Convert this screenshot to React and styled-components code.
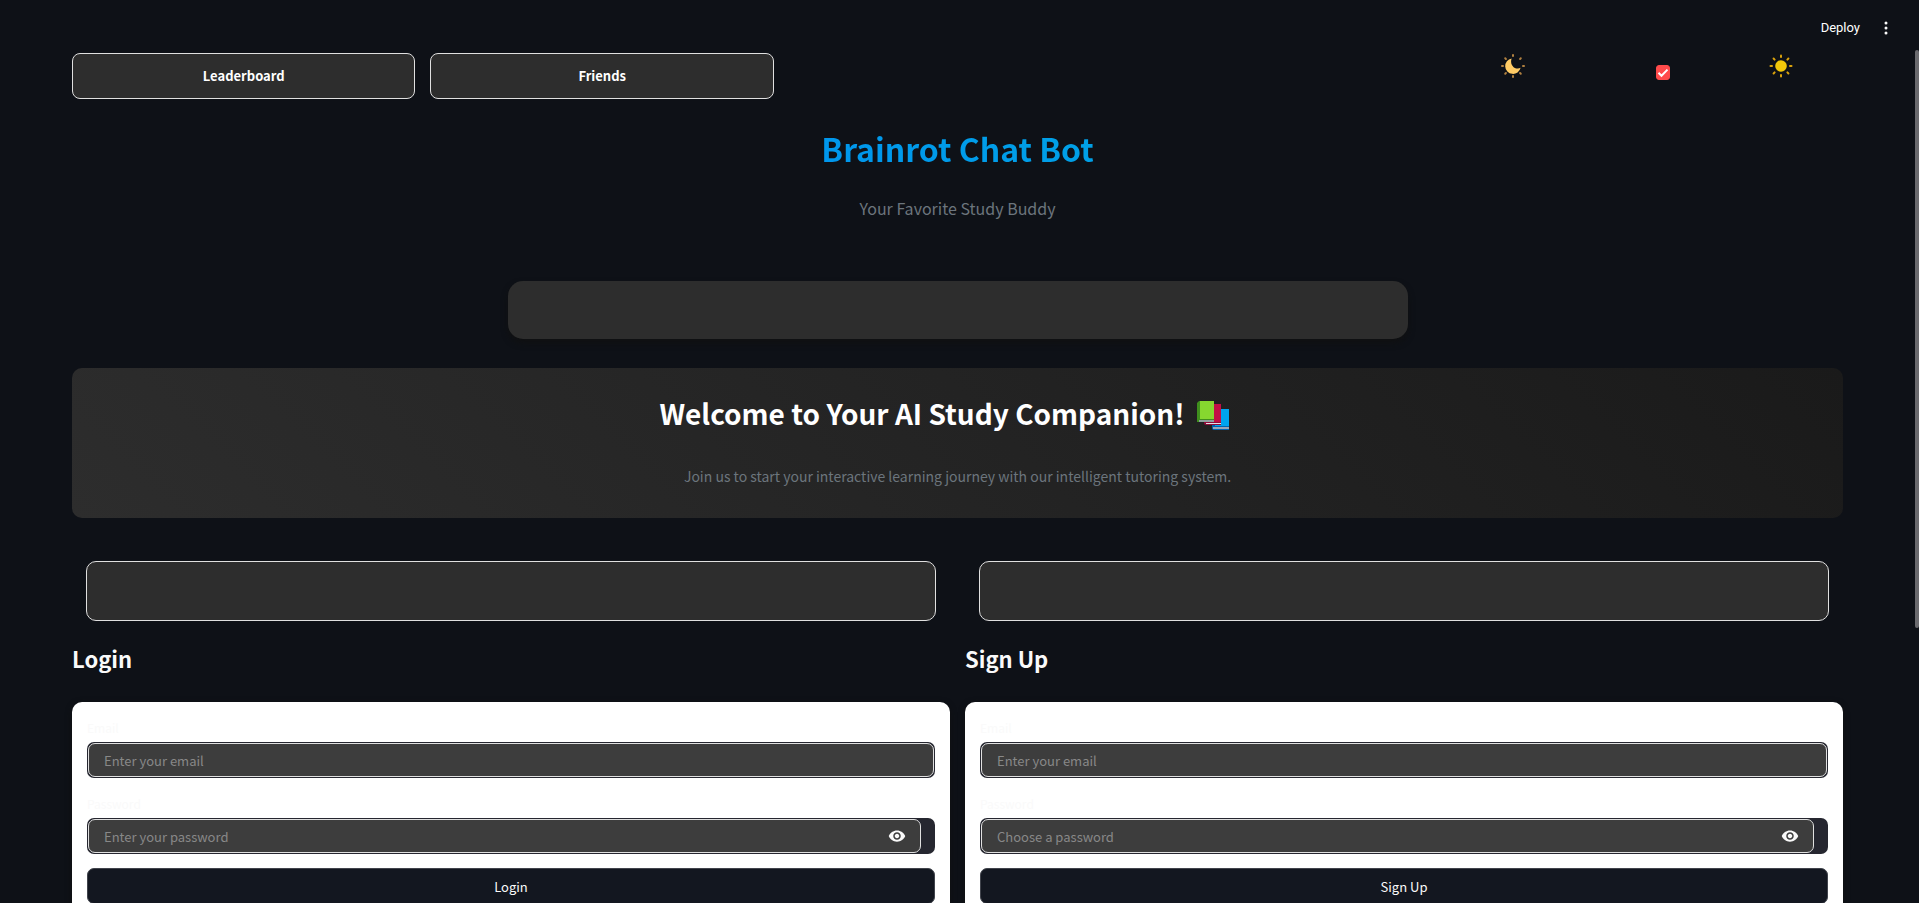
import React, { useState } from 'react'
import styled, { createGlobalStyle, css } from 'styled-components'

const GlobalStyle = createGlobalStyle`
    * {
        box-sizing: border-box;
    }

    html, body {
        margin: 0;
        height: 100%;
        overflow: hidden;
        background: #0e1117;
    }

    body, button, input {
        font-family: "Source Sans Pro", "Noto Sans CJK SC", "Noto Sans", sans-serif;
    }
`

const rays = [0, 45, 90, 135, 180, 225, 270, 315]

function MoonIcon() {
    return (
        <svg width="24" height="24" viewBox="0 0 24 24" aria-hidden="true">
            {rays.map(angle => (
                <rect key={angle} x="11" y="0" width="2" height="3" rx="1" fill="#b08040" transform={`rotate(${angle} 12 12)`} />
            ))}
            <path d="M10.6 4.4a7.8 7.8 0 1 0 9 9.4c-1.300.8-2.800 1-4.300.6-4-1-6.300-5.400-4.700-10z" fill="#ffcc66" />
        </svg>
    )
}

function SunIcon() {
    return (
        <svg width="24" height="24" viewBox="0 0 24 24" aria-hidden="true">
            {rays.map(angle => (
                <rect key={angle} x="11" y="0.500" width="2" height="3.500" rx="1" fill="#dba30c" transform={`rotate(${angle} 12 12)`} />
            ))}
            <circle cx="12" cy="12" r="5.800" fill="#f2c80a" />
        </svg>
    )
}

function BooksIcon() {
    return (
        <svg width="34" height="32" viewBox="0 0 34 32" aria-hidden="true">
            <path d="M18 10h15v21H18a2 2 0 0 1-2-2V12z" fill="#0063b1" />
            <path d="M19 10h14v17H19z" fill="#00a4ef" />
            <path d="M17 28h16v2H17z" fill="#9aa5b5" />
            <path d="M9 5h16v21H10a2 2 0 0 1-2-2z" fill="#900b3a" />
            <path d="M11 5h14v18H11z" fill="#c30f45" />
            <path d="M10 24h15v1H10z" fill="#e2e2e8" />
            <path d="M3 2h3v21H2a1 1 0 0 1-1-1V4z" fill="#3f8f1d" />
            <path d="M4 2h14v18H4z" fill="#86d72f" />
            <path d="M1 20h17v3H1z" fill="#3f8f1d" />
            <path d="M3 21h15v2H3z" fill="#8fa0a0" />
        </svg>
    )
}

function EyeIcon() {
    return (
        <svg width="18" height="18" viewBox="0 0 24 24" fill="#fafafa" aria-hidden="true">
            <path d="M12 4.500C7 4.500 2.730 7.610 1 12c1.730 4.390 6 7.500 11 7.500s9.270-3.110 11-7.500c-1.730-4.390-6-7.500-11-7.500zM12 17c-2.760 0-5-2.240-5-5s2.240-5 5-5 5 2.240 5 5-2.240 5-5 5zm0-8c-1.660 0-3 1.340-3 3s1.340 3 3 3 3-1.340 3-3-1.340-3-3-3z" />
        </svg>
    )
}

function AuthForm({ title, id, passwordHint }) {
    const [visible, setVisible] = useState(false)

    return (
        <Column>
            <EmptyBox />
            <FormTitle>{title}</FormTitle>
            <Form onSubmit={e => e.preventDefault()}>
                <Label htmlFor={`${id}-email`}>Email</Label>
                <Field>
                    <Input id={`${id}-email`} type="email" placeholder="Enter your email" />
                </Field>
                <Label htmlFor={`${id}-password`}>Password</Label>
                <Field $inset>
                    <Input
                        id={`${id}-password`}
                        type={visible ? 'text' : 'password'}
                        placeholder={passwordHint}
                    />
                    <EyeButton type="button" aria-label="Show password" onClick={() => setVisible(!visible)}>
                        <EyeIcon />
                    </EyeButton>
                </Field>
                <SubmitButton type="submit">{title}</SubmitButton>
            </Form>
        </Column>
    )
}

function App() {
    const [light, setLight] = useState(true)

    return (
        <Page>
            <GlobalStyle />
            <Header>
                <DeployButton type="button">Deploy</DeployButton>
                <MenuButton type="button" aria-label="Main menu">
                    <svg width="4" height="14" viewBox="0 0 4 14" fill="#fafafa" aria-hidden="true">
                        <circle cx="2" cy="2" r="1.500" />
                        <circle cx="2" cy="7" r="1.500" />
                        <circle cx="2" cy="12" r="1.500" />
                    </svg>
                </MenuButton>
            </Header>
            <Main>
                <TopRow>
                    <NavButton type="button">Leaderboard</NavButton>
                    <NavButton type="button">Friends</NavButton>
                    <ThemeSwitch>
                        <MoonIcon />
                        <Checkbox
                            type="checkbox"
                            aria-label="Toggle theme"
                            checked={light}
                            onChange={() => setLight(!light)}
                        />
                        <SunIcon />
                    </ThemeSwitch>
                </TopRow>
                <Title><span>Brainrot Chat Bot</span></Title>
                <Subtitle>Your Favorite Study Buddy</Subtitle>
                <Banner />
                <Welcome>
                    <WelcomeTitle>
                        Welcome to Your AI Study Companion!
                        <BooksIcon />
                    </WelcomeTitle>
                    <WelcomeText>
                        Join us to start your interactive learning journey with our intelligent tutoring system.
                    </WelcomeText>
                </Welcome>
                <Forms>
                    <AuthForm title="Login" id="login" passwordHint="Enter your password" />
                    <AuthForm title="Sign Up" id="signup" passwordHint="Choose a password" />
                </Forms>
            </Main>
            <ScrollThumb />
        </Page>
    )
}

export default App

const Page = styled.div`
    height: 100vh;
    overflow: hidden;
    background: #0e1117;
    color: #fafafa;
`

const Header = styled.header`
    height: 53px;
    padding: 2px 31px 0 0;
    display: flex;
    justify-content: flex-end;
    align-items: center;
    gap: 24px;
`

const plainButton = css`
    padding: 0;
    border: none;
    background: none;
    color: #ffffff;
    cursor: pointer;
`

const DeployButton = styled.button`
    ${plainButton}
    font-family: Roboto, sans-serif;
    font-size: 13px;
    line-height: 20px;
`

const MenuButton = styled.button`
    ${plainButton}
    display: flex;
    align-items: center;
`

const Main = styled.main`
    padding: 0 76px 0 72px;
`

const TopRow = styled.div`
    display: grid;
    grid-template-columns: 40fr 40fr 81fr 40fr;
    column-gap: 15px;
    align-items: start;
`

const NavButton = styled.button`
    height: 46px;
    padding: 0 0 2px;
    border: 1px solid #e0e0e0;
    border-radius: 8px;
    background: #2d2d2d;
    color: #ffffff;
    font-size: 13px;
    font-weight: 700;
    cursor: pointer;
`

const ThemeSwitch = styled.div`
    grid-column: 4;
    padding: 1px 50px 0 1px;
    display: flex;
    justify-content: space-between;
`

const Checkbox = styled.input`
    appearance: none;
    width: 14px;
    height: 15px;
    margin: 11px 0 0 32px;
    border: 1px solid #ff4b4b;
    border-radius: 3px;
    cursor: pointer;

    &:checked {
        background: #ff4b4b url("data:image/svg+xml,%3Csvg xmlns='http://www.w3.org/2000/svg' viewBox='0 0 14 14'%3E%3Cpath d='M2.500 7l3 3 6-6' fill='none' stroke='white' stroke-width='2'/%3E%3C/svg%3E") center / 14px no-repeat;
    }
`

const Title = styled.h1`
    margin: 23px 0 0;
    text-align: center;
    font-size: 32px;
    font-weight: 700;
    line-height: 52px;

    span {
        display: block;
        background: linear-gradient(45deg, #007bff, #00bcd4);
        background-clip: text;
        color: transparent;
    }
`

const Subtitle = styled.p`
    margin: 20px 0 0;
    text-align: center;
    color: #6c757d;
    font-size: 16px;
    line-height: 28px;
`

const Banner = styled.div`
    width: 100%;
    max-width: 900px;
    height: 58px;
    margin: 59px auto 0;
    border-radius: 15px;
    background: #2d2d2d;
    box-shadow: 0 4px 6px rgba(16, 16, 16, 0.8);
`

const Welcome = styled.section`
    margin-top: 29px;
    padding: 24px 32px 29px;
    border-radius: 10px;
    background: linear-gradient(45deg, #2d2d2d, #1a1a1a);
    text-align: center;
`

const WelcomeTitle = styled.h2`
    margin: 0;
    padding-right: 26px;
    display: flex;
    justify-content: center;
    align-items: center;
    gap: 11px;
    color: #ffffff;
    font-size: 28px;
    font-weight: 700;
    line-height: 43px;

    svg {
        margin-top: 3px;
    }
`

const WelcomeText = styled.p`
    margin: 28px 0 0;
    color: #6c757d;
    font-size: 14px;
    line-height: 26px;
`

const Forms = styled.div`
    margin-top: 43px;
    display: grid;
    grid-template-columns: 1fr 1fr;
    gap: 15px;
`

const Column = styled.section`
    min-width: 0;
`

const EmptyBox = styled.div`
    height: 60px;
    margin: 0 14px;
    border: 1px solid #e0e0e0;
    border-radius: 10px;
    background: #2d2d2d;
`

const FormTitle = styled.h3`
    margin: 20px 0 27px;
    font-size: 22px;
    font-weight: 700;
    line-height: 34px;
`

const Form = styled.form`
    padding: 16px 15px;
    border-radius: 10px;
    background: #ffffff;
    box-shadow: 0 2px 6px rgba(16, 16, 16, 0.8);
`

const Label = styled.label`
    display: block;
    margin-bottom: 4px;
    color: #fafafa;
    font-size: 12px;
    line-height: 20px;
`

const Field = styled.div`
    position: relative;
    height: 36px;
    margin-bottom: ${props => props.$inset ? '14px' : '16px'};
    padding: 1px ${props => props.$inset ? '14px' : '1px'} 1px 1px;
    border-radius: 7px;
    background: #262730;
`

const Input = styled.input`
    display: block;
    width: 100%;
    height: 34px;
    padding: 0 15px;
    border: 1px solid #e0e0e0;
    border-radius: 7px;
    outline: none;
    background: #3d3d3d;
    color: #ffffff;
    font-size: 13px;

    &::placeholder {
        color: #888888;
        opacity: 1;
    }
`

const EyeButton = styled.button`
    ${plainButton}
    position: absolute;
    top: 9px;
    right: 29px;
    display: flex;
`

const SubmitButton = styled.button`
    display: block;
    width: 100%;
    height: 36px;
    border: 1px solid #41444c;
    border-radius: 7px;
    background: #131720;
    color: #fafafa;
    font-size: 13px;
    cursor: pointer;
`

const ScrollThumb = styled.div`
    position: fixed;
    top: 50px;
    right: 0;
    width: 4px;
    height: 64vh;
    border-radius: 2px;
    background: #6b6b6f;
`
